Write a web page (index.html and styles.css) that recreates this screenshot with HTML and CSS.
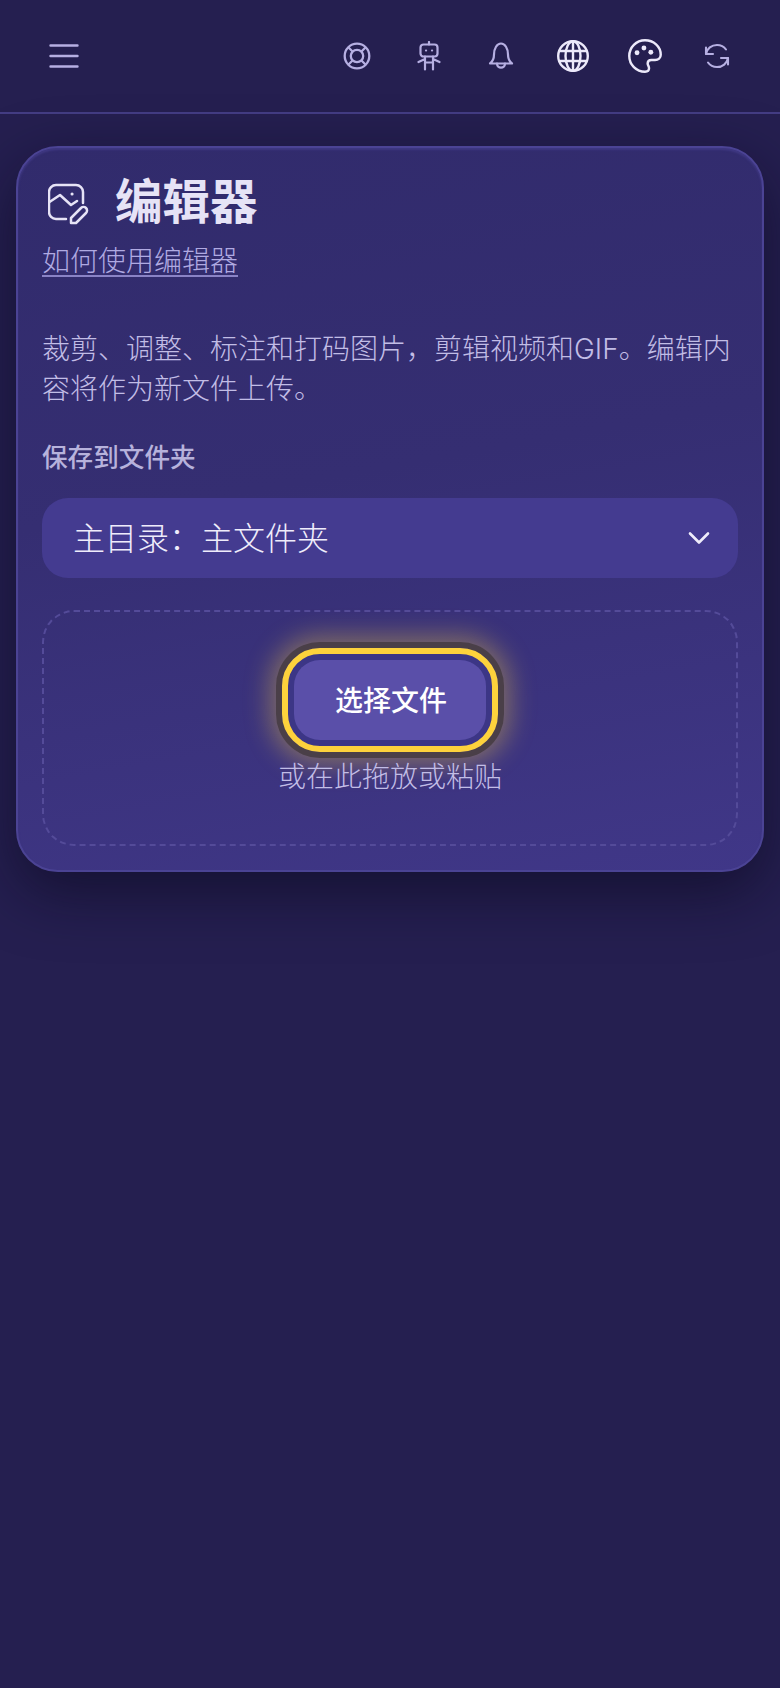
FILE: index.html
```html
<!DOCTYPE html>
<html lang="zh-CN">
<head>
<meta charset="utf-8">
<title>编辑器</title>
<link rel="stylesheet" href="styles.css">
</head>
<body>
<header class="topbar">
  <button class="icon-btn menu-btn" aria-label="菜单">
    <svg width="30" height="24" viewBox="0 0 30 24" fill="none" stroke="currentColor" stroke-width="2.4" stroke-linecap="round"><path d="M1.500 1.500h27M1.500 12h27M1.500 22.500h27"/></svg>
  </button>
  <div class="actions">
    <button class="icon-btn" aria-label="帮助">
      <svg width="28" height="28" viewBox="0 0 28 28" fill="none" stroke="currentColor" stroke-width="2.300"><circle cx="14" cy="14" r="12.300"/><circle cx="14" cy="14" r="6.200"/><path d="M5.300 5.300l4.500 4.500M22.700 5.300l-4.500 4.500M5.300 22.700l4.500-4.500M22.700 22.700l-4.500-4.500"/></svg>
    </button>
    <button class="icon-btn" aria-label="机器人">
      <svg width="24" height="30" viewBox="0 0 24 30" fill="none" stroke="currentColor" stroke-width="2.200" stroke-linecap="round" stroke-linejoin="round"><path d="M12 1v2.500"/><rect x="3.500" y="3.500" width="17" height="12" rx="3"/><path d="M9 9.500h.1M15 9.500h.1"/><path d="M8 15.500v13M16 15.500v13M8 21.500h8M8 18l-6.500 3M16 18l6.500 3"/></svg>
    </button>
    <button class="icon-btn" aria-label="通知">
      <svg width="26" height="28" viewBox="0 0 26 28" fill="none" stroke="currentColor" stroke-width="2.200" stroke-linecap="round" stroke-linejoin="round"><path d="M2 21.500c2.700-2 4-4.500 4-9C6 6.500 9 1.500 13 1.500s7 5 7 11c0 4.500 1.300 7 4 9z"/><path d="M9 21.500c0 5.500 8 5.500 8 0"/></svg>
    </button>
    <button class="icon-btn bright" aria-label="语言">
      <svg width="32" height="32" viewBox="0 0 32 32" fill="none" stroke="currentColor" stroke-width="2.400"><circle cx="16" cy="16" r="14.800"/><ellipse cx="16" cy="16" rx="7.500" ry="14.800"/><path d="M16 1.200v29.600M2.500 11h27M2.500 21h27"/></svg>
    </button>
    <button class="icon-btn bright" aria-label="主题">
      <svg width="34" height="34" viewBox="0 0 32 32" fill="none" stroke="currentColor" stroke-width="2.300" stroke-linejoin="round"><path d="M16 1.200C7.800 1.200 1.200 7.800 1.200 16S7.800 30.800 16 30.800c2.500 0 3.800-1.500 3.800-3.200 0-2.200-1.300-2.700-1.300-4.500 0-2 1.500-3.300 3.500-3.300h3.500c3 0 5.300-2 5.300-5C30.800 6.800 24 1.200 16 1.200z"/><circle cx="15" cy="8.500" r="2.300" fill="currentColor" stroke="none"/><circle cx="8.500" cy="13" r="2.300" fill="currentColor" stroke="none"/><circle cx="21.500" cy="12.500" r="2.300" fill="currentColor" stroke="none"/></svg>
    </button>
    <button class="icon-btn" aria-label="刷新">
      <svg width="26" height="26" viewBox="0 0 26 26" fill="none" stroke="currentColor" stroke-width="2.100" stroke-linecap="round" stroke-linejoin="round"><path d="M2 11C3 5.500 7.500 2 13 2c3.800 0 7 1.700 9 4.500"/><path d="M24 15c-1 5.500-5.500 9-11 9-3.800 0-7-1.700-9-4.500"/><path d="M2 4.500V11h7M24 21.500V15h-7"/></svg>
    </button>
  </div>
</header>
<main class="page">
  <section class="card">
    <div class="title-row">
      <svg class="title-icon" width="42" height="42" viewBox="0 0 42 42" fill="none" stroke="currentColor" stroke-width="2.500" stroke-linecap="round" stroke-linejoin="round"><path d="M18 36H8a7 7 0 0 1-7-7V9a7 7 0 0 1 7-7h20a7 7 0 0 1 7 7v11"/><path d="M1.500 19L12 12l11 10 6-4"/><path d="M24 11h.1" stroke-width="3"/><path d="M23 40v-5l10-10a3.500 3.500 0 0 1 5 5L28 40z"/></svg>
      <h1 class="title">编辑器</h1>
    </div>
    <a class="help-link" href="#">如何使用编辑器</a>
    <p class="desc">裁剪、调整、标注和打码图片，剪辑视频和GIF。编辑内容将作为新文件上传。</p>
    <div class="field-label">保存到文件夹</div>
    <div class="select">
      <span class="select-value">主目录：主文件夹</span>
      <svg width="22" height="14" viewBox="0 0 22 14" fill="none" stroke="currentColor" stroke-width="2.600" stroke-linecap="round" stroke-linejoin="round"><path d="M2 2.500l9 9 9-9"/></svg>
    </div>
    <div class="dropzone">
      <button class="choose">选择文件</button>
      <div class="hint">或在此拖放或粘贴</div>
    </div>
  </section>
</main>
</body>
</html>
```
FILE: styles.css
```css
* { box-sizing: border-box; }
html, body { margin: 0; }
body {
  background: #251f50;
  font-family: Inter, "Noto Sans CJK SC", "Noto Sans", sans-serif;
  color: #e6e3f6;
  min-height: 1688px;
}
button { font: inherit; border: 0; background: none; padding: 0; color: inherit; }
.topbar {
  height: 114px;
  border-bottom: 2px solid #443d84;
  display: flex;
  align-items: center;
  justify-content: space-between;
  padding: 0 27px 0 29px;
}
.icon-btn {
  width: 72px;
  height: 72px;
  display: flex;
  align-items: center;
  justify-content: center;
  color: #b6afe2;
}
.icon-btn.bright { color: #ece9fa; }
.menu-btn { width: 70px; }
.actions { display: flex; }
.page { padding: 32px 16px; }
.card {
  height: 726px;
  border: 2px solid #4b4394;
  border-radius: 42px;
  padding: 24px;
  background: linear-gradient(170deg, #312b6c 0%, #352e72 45%, #403788 100%);
  box-shadow: inset 0 2px 2px #3f3883, 0 20px 60px rgba(10, 8, 30, .6);
  display: flex;
  flex-direction: column;
}
.title-row { display: flex; align-items: center; gap: 25px; height: 60px; padding-left: 6px; flex: none; }
.title-icon { color: #e6e3f6; flex: none; margin-top: 4px; }
.title { margin: 0; font-size: 47.5px; line-height: 60px; font-weight: 700; color: #e6e3f6; }
.help-link {
  align-self: flex-start;
  font-size: 28px;
  line-height: 40px;
  color: #b0aae2;
  text-decoration: underline;
  text-decoration-color: #8a83c6;
  text-underline-offset: 4px;
  text-decoration-thickness: 2px;
  margin-top: 9px;
  font-weight: 300;
}
.desc { margin: 48px 0 0; font-size: 28px; line-height: 40px; color: #c2bde6; font-weight: 300; }
.field-label { margin-top: 32px; font-size: 25.6px; line-height: 34px; font-weight: 500; color: #b7b2dc; }
.select {
  margin-top: 23px;
  height: 80px;
  border-radius: 26px;
  background: #443b90;
  padding: 0 28px 0 31px;
  display: flex;
  align-items: center;
  justify-content: space-between;
  font-size: 32px;
  color: #efecfb;
  flex: none;
}
.select-value { padding-bottom: 4px; font-weight: 300; }
.dropzone {
  margin-top: 32px;
  height: 236px;
  flex: none;
  border: 2px dashed #544b99;
  border-radius: 32px;
  display: flex;
  flex-direction: column;
  align-items: center;
  padding-top: 48px;
}
.choose {
  width: 192px;
  height: 80px;
  padding: 0 0 2px 2px;
  border-radius: 26px;
  background: #5a4fa9;
  color: #fff;
  font-size: 28px;
  font-weight: 500;
  outline: 6px solid #fdd23c;
  outline-offset: 6px;
  box-shadow: 0 0 0 12px #3c3686, 0 0 0 18px #4a3f48, 0 0 24px 25px rgba(253, 210, 60, .35);
}
.hint { margin-top: 17px; font-size: 28px; line-height: 40px; color: #c2bde6; position: relative; font-weight: 300; }
```
